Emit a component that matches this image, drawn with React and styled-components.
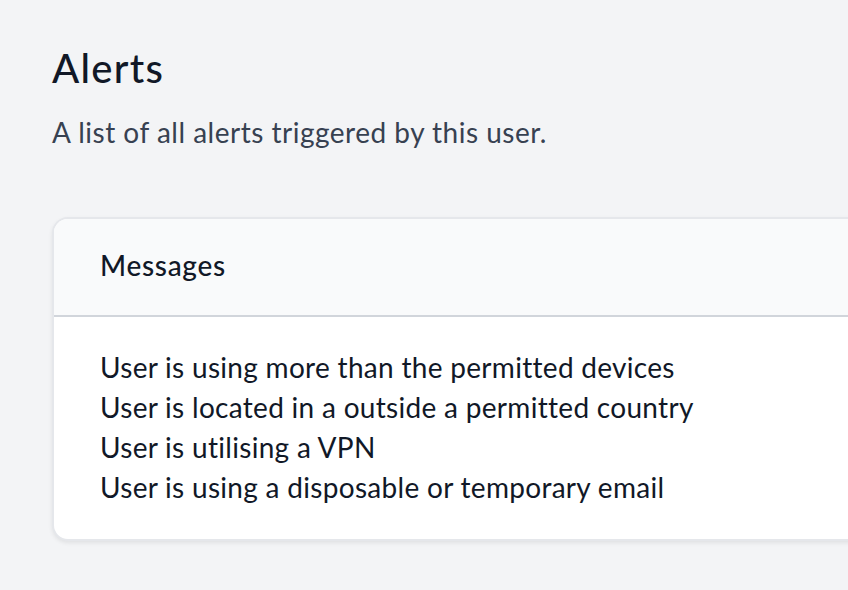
import styled, { createGlobalStyle } from 'styled-components'

const GlobalStyle = createGlobalStyle`
  html, body {
    margin: 0;
    padding: 0;
    background: #f3f4f6;
  }
  body {
    font-family: Lato, "Noto Sans", sans-serif;
    -webkit-font-smoothing: antialiased;
  }
`

const alerts = [
  'User is using more than the permitted devices',
  'User is located in a outside a permitted country',
  'User is utilising a VPN',
  'User is using a disposable or temporary email',
]

const App = () => {
  return (
    <>
      <GlobalStyle />
      <Page>
        <Title>Alerts</Title>
        <Subtitle>A list of all alerts triggered by this user.</Subtitle>
        <Card>
          <CardHeader>
            <HeaderLabel>Messages</HeaderLabel>
          </CardHeader>
          <CardBody>
            {alerts.map(text => <Message key={text}>{text}</Message>)}
          </CardBody>
        </Card>
      </Page>
    </>
  )
}

const Page = styled.div`
  min-height: 590px;
  box-sizing: border-box;
  padding: 40px 0 0 52px;
  overflow: hidden;
`

const Title = styled.h1`
  margin: 0;
  font-size: 40px;
  line-height: 56px;
  font-weight: 500;
  letter-spacing: 1.3px;
  color: #111827;
`

const Subtitle = styled.p`
  margin: 16px 0 0;
  font-size: 28px;
  line-height: 40px;
  letter-spacing: 0.5px;
  color: #374151;
`

const Card = styled.div`
  margin-top: 65px;
  width: 900px;
  background: #fff;
  border: 2px solid #e5e7eb;
  border-right: none;
  border-radius: 16px 0 0 16px;
  box-shadow: 0 2px 4px rgba(0, 0, 0, 0.08);
  overflow: hidden;
`

const CardHeader = styled.div`
  background: #f9fafb;
  border-bottom: 2px solid #d1d5db;
  padding: 26px 46px 30px;
`

const HeaderLabel = styled.div`
  font-size: 28px;
  line-height: 40px;
  font-weight: 500;
  letter-spacing: 0.7px;
  color: #111827;
`

const CardBody = styled.ul`
  list-style: none;
  margin: 0;
  padding: 30px 46px 32px;
`

const Message = styled.li`
  font-size: 28px;
  line-height: 40px;
  letter-spacing: 0.3px;
  color: #111827;
`

export default App
